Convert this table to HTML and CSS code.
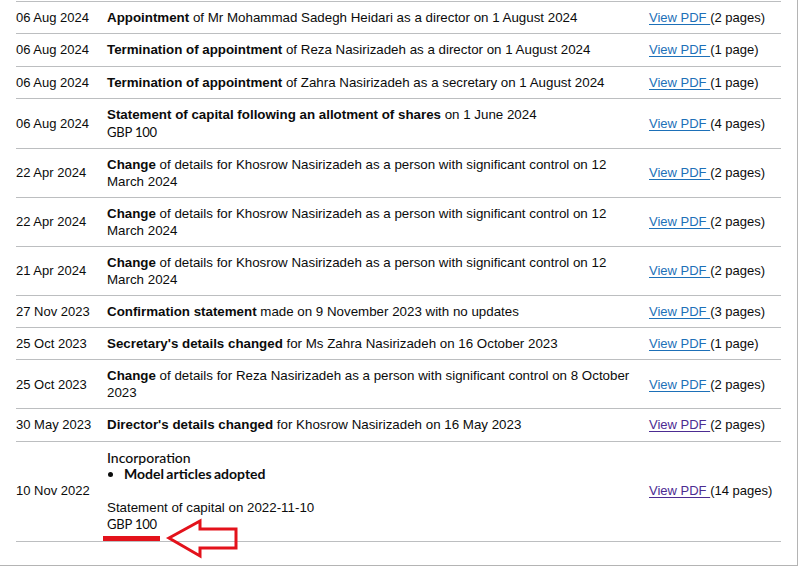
FILE: index.html
```html
<!DOCTYPE html>
<html lang="en">
<head>
    <meta charset="UTF-8">
    <meta name="viewport" content="width=device-width, initial-scale=1.0">
    <title>Filing history</title>
    <link rel="stylesheet" href="styles.css">
</head>
<body>
    <div class="frame">
        <table class="filing-history">
            <colgroup>
                <col class="col-date">
                <col class="col-desc">
                <col class="col-link">
            </colgroup>
            <tbody>
                <tr>
                    <td>06 Aug 2024</td>
                    <td><strong>Appointment</strong> of Mr Mohammad Sadegh Heidari as a director on 1 August 2024</td>
                    <td><a href="#">View PDF </a>(2 pages)</td>
                </tr>
                <tr>
                    <td>06 Aug 2024</td>
                    <td><strong>Termination of appointment</strong> of Reza Nasirizadeh as a director on 1 August 2024</td>
                    <td><a href="#">View PDF </a>(1 page)</td>
                </tr>
                <tr>
                    <td>06 Aug 2024</td>
                    <td><strong>Termination of appointment</strong> of Zahra Nasirizadeh as a secretary on 1 August 2024</td>
                    <td><a href="#">View PDF </a>(1 page)</td>
                </tr>
                <tr>
                    <td>06 Aug 2024</td>
                    <td><strong>Statement of capital following an allotment of shares</strong> on 1 June 2024<br><span class="capital">GBP 100</span></td>
                    <td><a href="#">View PDF </a>(4 pages)</td>
                </tr>
                <tr>
                    <td>22 Apr 2024</td>
                    <td><strong>Change</strong> of details for Khosrow Nasirizadeh as a person with significant control on 12 March 2024</td>
                    <td><a href="#">View PDF </a>(2 pages)</td>
                </tr>
                <tr>
                    <td>22 Apr 2024</td>
                    <td><strong>Change</strong> of details for Khosrow Nasirizadeh as a person with significant control on 12 March 2024</td>
                    <td><a href="#">View PDF </a>(2 pages)</td>
                </tr>
                <tr>
                    <td>21 Apr 2024</td>
                    <td><strong>Change</strong> of details for Khosrow Nasirizadeh as a person with significant control on 12 March 2024</td>
                    <td><a href="#">View PDF </a>(2 pages)</td>
                </tr>
                <tr>
                    <td>27 Nov 2023</td>
                    <td><strong>Confirmation statement</strong> made on 9 November 2023 with no updates</td>
                    <td><a href="#">View PDF </a>(3 pages)</td>
                </tr>
                <tr>
                    <td>25 Oct 2023</td>
                    <td><strong>Secretary's details changed</strong> for Ms Zahra Nasirizadeh on 16 October 2023</td>
                    <td><a href="#">View PDF </a>(1 page)</td>
                </tr>
                <tr>
                    <td>25 Oct 2023</td>
                    <td><strong>Change</strong> of details for Reza Nasirizadeh as a person with significant control on 8 October 2023</td>
                    <td><a href="#">View PDF </a>(2 pages)</td>
                </tr>
                <tr>
                    <td>30 May 2023</td>
                    <td><strong>Director's details changed</strong> for Khosrow Nasirizadeh on 16 May 2023</td>
                    <td><a href="#" class="visited">View PDF </a>(2 pages)</td>
                </tr>
                <tr>
                    <td>10 Nov 2022</td>
                    <td class="incorporation">
                        <div class="inc-title">Incorporation</div>
                        <ul class="inc-list">
                            <li>Model articles adopted</li>
                        </ul>
                        <div class="inc-capital">Statement of capital on 2022-11-10<br><span class="capital">GBP 100</span></div>
                        <!-- marca roja sobre la captura -->
                        <svg class="annotation" width="140" height="44" viewBox="0 0 140 44">
                            <rect x="0" y="18" width="57" height="5" fill="#e3121b"/>
                            <path d="M66 20 L97 3 L97 11 L133 11 L133 30 L97 30 L97 38 Z" fill="none" stroke="#e3121b" stroke-width="3" stroke-linejoin="miter"/>
                        </svg>
                    </td>
                    <td><a href="#" class="visited">View PDF </a>(14 pages)</td>
                </tr>
            </tbody>
        </table>
    </div>
</body>
</html>
```

FILE: styles.css
```css
/* Estilos generales */
html, body {
    margin: 0;
    padding: 0;
    background-color: #fff;
}
body {
    font-family: "Liberation Sans", Arial, sans-serif;
    font-size: 13px;
    color: #0b0c0c;
}
.frame {
    width: 797px;
    height: 564px;
    border-right: 1px solid #b4b4b4;
    border-bottom: 1px solid #b4b4b4;
    overflow: hidden;
    padding-top: 1px;
}
.filing-history {
    margin-left: 16px;
    width: 765px;
    border-collapse: collapse;
    table-layout: fixed;
    border-top: 1px solid #bcbec0;
}
.col-date {
    width: 91px;
}
.col-desc {
    width: 542px;
}
.col-link {
    width: 132px;
}
.filing-history td {
    padding: 8px 8px 6.5px 0;
    line-height: 16.75px;
    vertical-align: middle;
    border-bottom: 1px solid #bcbec0;
}
.filing-history td:nth-child(2) {
    font-size: 13.33px;
}
.filing-history td:last-child {
    padding-right: 0;
}
.filing-history strong {
    font-weight: bold;
}
.filing-history a {
    color: #1d70b8;
    text-decoration: underline;
    text-underline-offset: 2px;
}
.filing-history a.visited {
    color: #4c2c92;
}
.capital {
    font-family: "Lato", sans-serif;
    font-size: 13px;
    letter-spacing: -0.2px;
}
.incorporation {
    position: relative;
}
.inc-title {
    font-family: "Lato", sans-serif;
    font-size: 14px;
    font-weight: 500;
}
.inc-list {
    margin: 0 0 16.5px 0;
    padding-left: 17px;
    font-family: "Lato", sans-serif;
    font-size: 14px;
    font-weight: bold;
    word-spacing: -1px;
}
.annotation {
    position: absolute;
    left: -4px;
    top: 76px;
}
```
